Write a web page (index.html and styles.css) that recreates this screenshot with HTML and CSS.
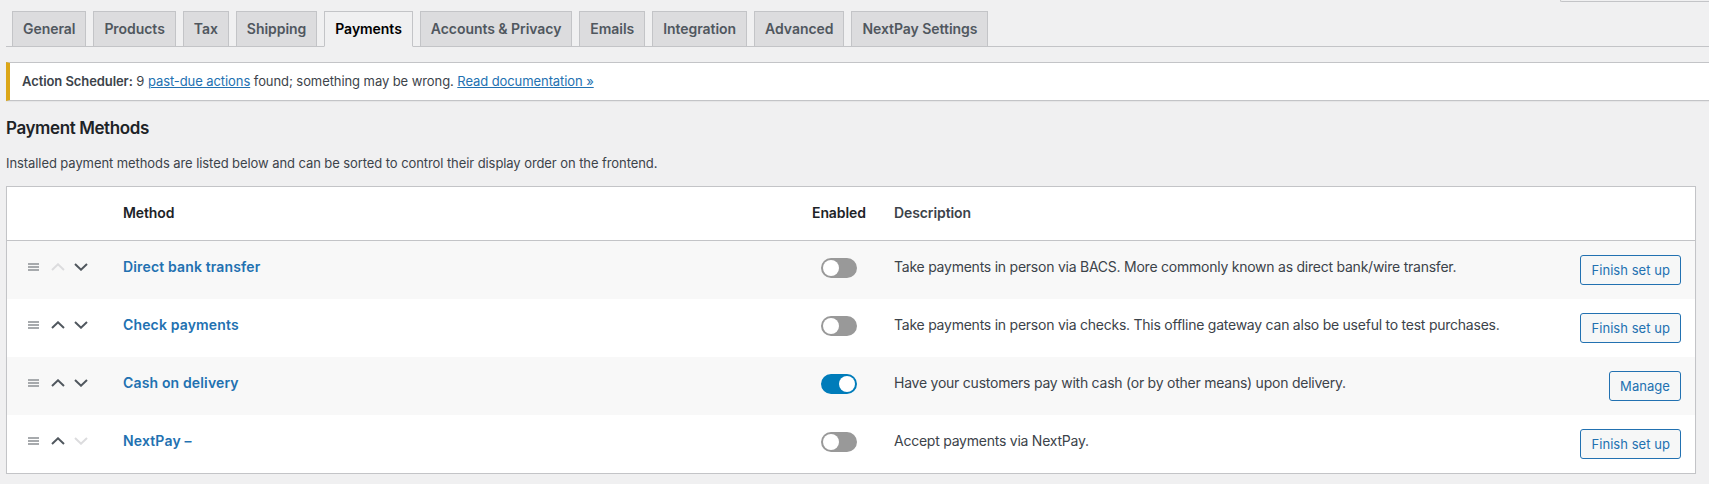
FILE: index.html
```html
<!DOCTYPE html>
<html lang="en">
<head>
<meta charset="utf-8">
<title>Payments</title>
<link rel="stylesheet" href="styles.css">
</head>
<body>
<div class="screen-tab"></div>
<div class="wrap">
  <nav class="nav-tabs">
    <a class="nav-tab">General</a>
    <a class="nav-tab">Products</a>
    <a class="nav-tab">Tax</a>
    <a class="nav-tab">Shipping</a>
    <a class="nav-tab nav-tab-active">Payments</a>
    <a class="nav-tab">Accounts &amp; Privacy</a>
    <a class="nav-tab">Emails</a>
    <a class="nav-tab">Integration</a>
    <a class="nav-tab">Advanced</a>
    <a class="nav-tab">NextPay Settings</a>
  </nav>

  <div class="notice">
    <p><strong>Action Scheduler:</strong> 9 <a href="#">past-due actions</a> found; something may be wrong. <a href="#">Read documentation &raquo;</a></p>
  </div>

  <h2 class="title">Payment Methods</h2>
  <p class="intro">Installed payment methods are listed below and can be sorted to control their display order on the frontend.</p>

  <div class="gateways">
    <div class="row head">
      <div class="c-sort"></div>
      <div class="c-name">Method</div>
      <div class="c-status">Enabled</div>
      <div class="c-desc">Description</div>
      <div class="c-action"></div>
    </div>

    <div class="row alt">
      <div class="c-sort">
        <span class="handle"><i></i><i></i><i></i></span>
        <svg class="arrow off" viewBox="0 0 14 8"><polyline points="1,7 7,1.3 13,7"/></svg>
        <svg class="arrow" viewBox="0 0 14 8"><polyline points="1,1 7,6.7 13,1"/></svg>
      </div>
      <div class="c-name"><a href="#">Direct bank transfer</a></div>
      <div class="c-status"><span class="toggle"></span></div>
      <div class="c-desc">Take payments in person via BACS. More commonly known as direct bank/wire transfer.</div>
      <div class="c-action"><a class="button" href="#">Finish set up</a></div>
    </div>

    <div class="row">
      <div class="c-sort">
        <span class="handle"><i></i><i></i><i></i></span>
        <svg class="arrow" viewBox="0 0 14 8"><polyline points="1,7 7,1.3 13,7"/></svg>
        <svg class="arrow" viewBox="0 0 14 8"><polyline points="1,1 7,6.7 13,1"/></svg>
      </div>
      <div class="c-name"><a href="#">Check payments</a></div>
      <div class="c-status"><span class="toggle"></span></div>
      <div class="c-desc">Take payments in person via checks. This offline gateway can also be useful to test purchases.</div>
      <div class="c-action"><a class="button" href="#">Finish set up</a></div>
    </div>

    <div class="row alt">
      <div class="c-sort">
        <span class="handle"><i></i><i></i><i></i></span>
        <svg class="arrow" viewBox="0 0 14 8"><polyline points="1,7 7,1.3 13,7"/></svg>
        <svg class="arrow" viewBox="0 0 14 8"><polyline points="1,1 7,6.7 13,1"/></svg>
      </div>
      <div class="c-name"><a href="#">Cash on delivery</a></div>
      <div class="c-status"><span class="toggle on"></span></div>
      <div class="c-desc">Have your customers pay with cash (or by other means) upon delivery.</div>
      <div class="c-action"><a class="button" href="#">Manage</a></div>
    </div>

    <div class="row">
      <div class="c-sort">
        <span class="handle"><i></i><i></i><i></i></span>
        <svg class="arrow" viewBox="0 0 14 8"><polyline points="1,7 7,1.3 13,7"/></svg>
        <svg class="arrow off" viewBox="0 0 14 8"><polyline points="1,1 7,6.7 13,1"/></svg>
      </div>
      <div class="c-name"><a href="#">NextPay &ndash;</a></div>
      <div class="c-status"><span class="toggle"></span></div>
      <div class="c-desc">Accept payments via NextPay.</div>
      <div class="c-action"><a class="button" href="#">Finish set up</a></div>
    </div>
  </div>
</div>
</body>
</html>
```

FILE: styles.css
```css
* { box-sizing: border-box; }
html, body { margin: 0; padding: 0; }
body {
  background: #f0f0f1;
  color: #3c434a;
  font-family: Inter, "Liberation Sans", Arial, sans-serif;
  font-size: 13px;
  line-height: 1.4;
  letter-spacing: -0.08px;
  overflow: hidden;
  position: relative;
}
a { color: #2271b1; }

.screen-tab {
  position: absolute;
  top: 0;
  right: 0;
  width: 149px;
  height: 2px;
  border-bottom: 1px solid #c3c4c7;
  border-left: 1px solid #c3c4c7;
  border-bottom-left-radius: 3px;
}

.wrap { padding-left: 6px; }

.nav-tabs {
  display: flex;
  gap: 7px;
  padding: 11px 0 0 6px;
  border-bottom: 1px solid #c3c4c7;
}
.nav-tab {
  display: block;
  padding: 5px 10px;
  margin-bottom: -1px;
  border: 1px solid #c3c4c7;
  background: #dcdcde;
  color: #50575e;
  font-size: 14px;
  font-weight: 600;
  line-height: 24px;
  letter-spacing: -0.05px;
  text-decoration: none;
  white-space: nowrap;
}
.nav-tab-active {
  background: #f0f0f1;
  border-bottom-color: #f0f0f1;
  color: #000;
}

.notice {
  margin: 15px 0 0;
  background: #fff;
  border: 1px solid #c3c4c7;
  border-right: 0;
  border-left: 4px solid #dba617;
  box-shadow: 0 1px 1px rgba(0,0,0,0.04);
  padding: 1px 12px;
}
.notice p {
  margin: 6px 0;
  padding: 2px 0;
  line-height: 19px;
  color: #3c434a;
}
.notice strong { color: #3c434a; font-weight: 600; }

.title {
  margin: 15px 0 0;
  font-size: 17px;
  font-weight: 600;
  line-height: 24px;
  letter-spacing: -0.4px;
  color: #1d2327;
}
.intro {
  margin: 13px 0 13px;
  line-height: 20px;
  color: #3c434a;
}

.gateways {
  margin-right: 13px;
  background: #fff;
  border: 1px solid #c3c4c7;
  box-shadow: 0 1px 1px rgba(0,0,0,0.04);
}
.row {
  display: grid;
  grid-template-columns: 116px 689px 82px 1fr auto;
  align-items: center;
  height: 58px;
}
.row.alt { background: #f8f8f8; }
.row.head {
  height: 54px;
  border-bottom: 1px solid #c3c4c7;
  font-size: 14px;
  font-weight: 600;
  letter-spacing: -0.1px;
  color: #1d2327;
}
.head > div { padding-bottom: 1px; }

.c-sort {
  display: flex;
  align-items: center;
  padding-left: 21px;
  gap: 9px;
}
.row > .c-sort { margin-top: -6px; }
.handle {
  display: flex;
  flex-direction: column;
  gap: 1px;
  width: 11px;
  margin-right: 3px;
}
.handle i {
  display: block;
  height: 2px;
  background: #a7aaad;
}
.arrow {
  width: 14px;
  height: 8px;
  fill: none;
  stroke: #50575e;
  stroke-width: 2;
}
.arrow.off { stroke: #dcdcde; }

.c-name a {
  font-size: 14px;
  font-weight: 600;
  letter-spacing: 0.15px;
  text-decoration: none;
  color: #2271b1;
}
.row > .c-name, .row > .c-desc { margin-top: -6px; }
.head > .c-name, .head > .c-desc { margin-top: 0; }

.c-status .toggle { margin-top: -4px; }
.toggle {
  position: relative;
  display: block;
  width: 36px;
  height: 20px;
  margin-left: 9px;
  border: 2px solid #999;
  border-radius: 10px;
  background: #999;
}
.toggle::after {
  content: "";
  position: absolute;
  top: 0;
  left: 0;
  width: 16px;
  height: 16px;
  border-radius: 50%;
  background: #fff;
}
.toggle.on { background: #007cba; border-color: #007cba; }
.toggle.on::after { left: auto; right: 0; }

.c-desc {
  color: #3c434a;
  font-size: 14px;
  letter-spacing: -0.24px;
}
.head > .c-desc { letter-spacing: -0.1px; }

.c-action {
  display: flex;
  justify-content: flex-end;
  padding-right: 14px;
}
.button {
  display: inline-block;
  height: 30px;
  line-height: 28px;
  padding: 0 10px;
  border: 1px solid #2271b1;
  border-radius: 3px;
  background: #f6f7f7;
  color: #2271b1;
  text-decoration: none;
  font-size: 13px;
  letter-spacing: 0.05px;
}
```
